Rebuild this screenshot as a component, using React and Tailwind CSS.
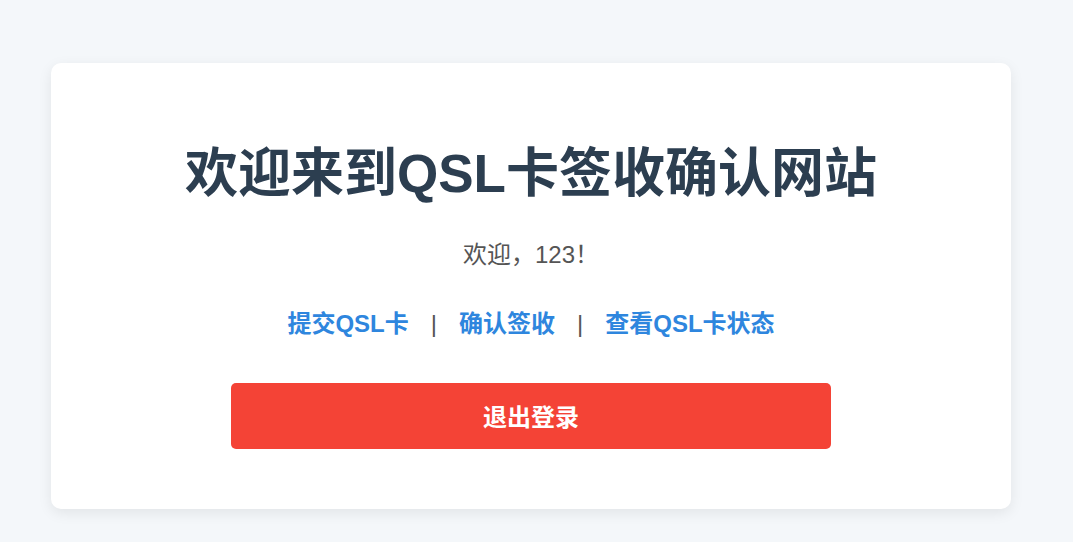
import React from 'react';

const font = { fontFamily: '"Liberation Sans", "Noto Sans CJK SC", sans-serif' };

export default function App() {
  const links = ['提交QSL卡', '确认签收', '查看QSL卡状态'];
  return (
    <div className="min-h-[542px] bg-[#f4f7fa] pt-[63px]" style={font}>
      <div className="ml-[51px] w-[960px] h-[446px] bg-white rounded-[10px] shadow-[0_4px_14px_rgba(0,0,0,0.08)] flex flex-col items-center pt-[84px]">
        <h1 className="text-[53px] leading-none font-bold text-[#2c3e50]">
          欢迎来到QSL卡签收确认网站
        </h1>
        <p className="mt-[42px] text-[24px] leading-[26px] text-[#555]">欢迎，123！</p>
        <nav className="mt-[43px] flex items-center text-[24px] leading-[26px]">
          {links.map((l, i) => (
            <React.Fragment key={l}>
              {i > 0 && <span className="mx-[22px] text-[#555]">|</span>}
              <a href="#" className="font-bold text-[#2e86de]">{l}</a>
            </React.Fragment>
          ))}
        </nav>
        <button className="mt-[46px] w-[600px] h-[66px] pt-[3px] rounded-[5px] bg-[#f44336] text-white text-[24px] font-bold">
          退出登录
        </button>
      </div>
    </div>
  );
}
